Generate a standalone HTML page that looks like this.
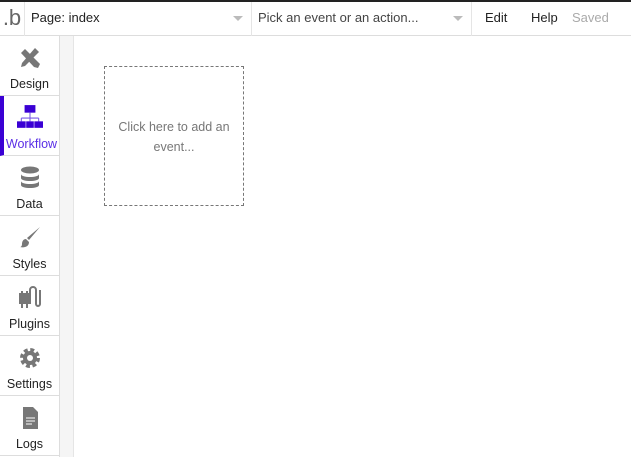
<!DOCTYPE html>
<html><head><style>
*{margin:0;padding:0;box-sizing:border-box}
body{width:631px;height:457px;overflow:hidden;background:#fff;font-family:"Liberation Sans",sans-serif;position:relative;font-size:13px;color:#222}
.top{position:absolute;left:0;top:0;width:631px;height:2px;background:#222}
.hdr{position:absolute;left:0;top:2px;width:631px;height:34px;border-bottom:1px solid #ddd}
.logo{position:absolute;left:0;top:0;width:25px;height:34px;border-right:1px solid #e5e5e5;font-size:22px;color:#666;line-height:32px;text-align:center}
.sel{position:absolute;top:0;height:34px;border-right:1px solid #e5e5e5;line-height:32px;padding-left:6px}
.caret{position:absolute;right:8px;top:14px;width:0;height:0;border-left:5px solid transparent;border-right:5px solid transparent;border-top:5px solid #bbb}
.menu{position:absolute;top:0;line-height:32px}
.side{position:absolute;left:0;top:36px;width:60px;height:421px;border-right:1px solid #ddd}
.strip{position:absolute;left:60px;top:36px;width:14px;height:421px;background:#f5f5f5;border-right:1px solid #e5e5e5}
.it{position:absolute;left:0;width:59px;height:60px;border-bottom:1px solid #ddd;text-align:center;font-size:12.5px}
.it svg{position:absolute;left:18px;top:10px}
.it span{position:absolute;left:0;right:0;top:41px}
.act{border-left:4px solid #3a00d4;color:#5a2ee6}
.box{position:absolute;left:104px;top:66px;width:140px;height:140px;border:1px dashed #777;text-align:center;color:#777;font-size:12.5px;line-height:20px;padding-top:50px}
</style></head><body>
<div class="top"></div>
<div class="hdr">
<div class="logo">.b</div>
<div class="sel" style="left:25px;width:227px">Page: index<div class="caret"></div></div>
<div class="sel" style="left:252px;width:220px;color:#444">Pick an event or an action...<div class="caret"></div></div>
<div class="menu" style="left:485px">Edit</div>
<div class="menu" style="left:531px">Help</div>
<div class="menu" style="left:572px;color:#aaa">Saved</div>
</div>
<div class="side">
<div class="it" style="top:0"><svg width="24" height="24" viewBox="0 0 24 24"><path d="M3 7l4-4 15 15-2 4-4-1z M17 2l4 4-14 14-4 1 1-4z" fill="#777"/></svg><span>Design</span></div>
<div class="it act" style="top:60px"><svg width="26" height="26" viewBox="0 0 24 24" style="left:13px;top:8px"><rect x="7" y="1" width="10" height="7" fill="#3a00d4"/><path d="M12 8v5M4 13h16M4 13v3M12 13v3M20 13v3" stroke="#7a5ae6" fill="none"/><rect x="0" y="16" width="8" height="6" fill="#3a00d4"/><rect x="8.5" y="16" width="7" height="6" fill="#3a00d4"/><rect x="16" y="16" width="8" height="6" fill="#3a00d4"/></svg><span>Workflow</span></div>
<div class="it" style="top:120px"><svg width="24" height="24" viewBox="0 0 24 24"><ellipse cx="12" cy="4" rx="9" ry="3.5" fill="#777"/><path d="M3 8c0 4 18 4 18 0v4c0 4-18 4-18 0zM3 15c0 4 18 4 18 0v4c0 4-18 4-18 0z" fill="#777"/></svg><span>Data</span></div>
<div class="it" style="top:180px"><svg width="24" height="24" viewBox="0 0 24 24"><path d="M22 1L11 14l-2-2z" fill="#777"/><path d="M8 13c-3 0-4 3-4 5s-1 3-2 3c4 1 9 0 9-5z" fill="#777"/></svg><span>Styles</span></div>
<div class="it" style="top:240px"><svg width="24" height="24" viewBox="0 0 24 24"><path d="M2 8h10v9H2zM4 17v5M9 17v5M4 5v3M9 5v3" stroke="#777" stroke-width="2" fill="#777"/><path d="M12 14V4a3 3 0 016 0v14a2 2 0 004 0V4" stroke="#777" stroke-width="2" fill="none"/></svg><span>Plugins</span></div>
<div class="it" style="top:300px"><svg width="24" height="24" viewBox="0 0 24 24"><circle cx="12" cy="12" r="7" fill="none" stroke="#777" stroke-width="6" stroke-dasharray="3.3 2.2"/><circle cx="12" cy="12" r="7" fill="#777"/><circle cx="12" cy="12" r="3" fill="#fff"/></svg><span>Settings</span></div>
<div class="it" style="top:360px"><svg width="24" height="24" viewBox="0 0 24 24"><path d="M5 1h10l5 5v17H5z" fill="#777"/><path d="M8 12h9M8 15h9M8 18h6" stroke="#fff"/></svg><span>Logs</span></div>
</div>
<div class="strip"></div>
<div class="box">Click here to add an<br>event...</div>
</body></html>
